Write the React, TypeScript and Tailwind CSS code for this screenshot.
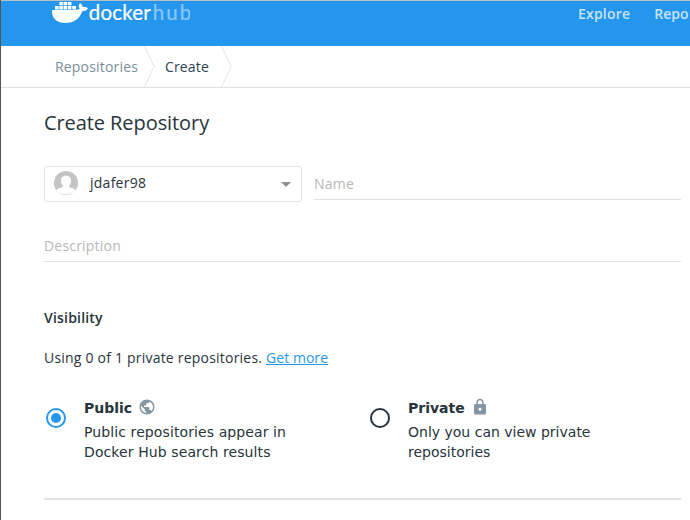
import { MdLock, MdPublic, MdArrowDropDown } from "react-icons/md";
import type { ReactNode } from "react";

function Logo() {
  return (
    <svg width="139" height="26" viewBox="51 0 139 26" className="-mt-px block">
      <g fill="#fff">
        <path d="M52 10H75.5C77.5 10 79 9.5 79.8 8.8C78.2 7 78.5 4.8 80 3C81.7 4.2 82.6 5.6 82.8 7.2C84.8 6.8 86.7 7.2 88 8.2C87 10.4 84.9 11.3 82.2 11.2C79.8 18.5 74.2 22.9 65 22.9C56.4 22.9 51.6 18.4 52 10Z" />
        <path d="M55 6h3.6v3.4H55zM59.3 6h3.6v3.4h-3.6zM63.6 6h3.6v3.4h-3.6zM67.9 6h3.6v3.4h-3.6zM72.2 6h3.8v3.4h-3.8zM59.3 2h3.6v3.3h-3.6zM63.6 2h3.6v3.3h-3.6zM67.9 2h3.6v3.3h-3.6z" />
      </g>
      <text x="88.8" y="20" textLength="62" strokeWidth="0.2" className="fill-white stroke-white font-['Lato',sans-serif] text-[20.5px] font-normal">
        docker
      </text>
      <text x="152.8" y="20" textLength="38.5" strokeWidth="0.2" className="fill-[#8cc6f6] stroke-[#8cc6f6] font-['Lato',sans-serif] text-[20.5px] font-normal">
        hub
      </text>
    </svg>
  );
}

function Chevron() {
  return (
    <svg width="11" height="41" viewBox="0 0 11 41" className="block shrink-0" fill="none" stroke="#e3e5e7">
      <path d="M.5 0L10 20.5L.5 41" />
    </svg>
  );
}

function Avatar() {
  return (
    <svg width="24" height="24" viewBox="0 0 24 24" className="mb-0.5 block shrink-0">
      <circle cx="12" cy="12" r="12" fill="#c4c4c4" />
      <path
        d="M12 4.8C8.9 4.8 6.9 6.8 6.9 9.6C6.9 12 7.8 13.9 9.1 15C9 16.1 7.8 16.5 5.8 17.1C4 17.7 2.8 18.7 2.2 19.6C4.6 22.4 8.1 23.6 12 23.6C15.9 23.6 19.4 22.4 21.8 19.6C21.2 18.7 20 17.7 18.2 17.1C16.2 16.5 15 16.1 14.9 15C16.2 13.9 17.1 12 17.1 9.6C17.1 6.8 15.1 4.8 12 4.8Z"
        fill="#fff"
      />
    </svg>
  );
}

function Option({ title, icon, checked, children }: { title: string; icon: ReactNode; checked?: boolean; children: ReactNode }) {
  return (
    <div className="flex w-[324px] shrink-0 pl-0.5 font-['DejaVu_Sans',sans-serif]">
      <span className={`mt-[10px] mr-[18px] flex size-5 shrink-0 items-center justify-center rounded-full border-2 ${checked ? "border-[#2496ed]" : "border-[#27343b]"}`}>
        {checked && <span className="size-[10px] rounded-full bg-[#2496ed]" />}
      </span>
      <div>
        <div className="flex h-5 items-center text-[14px] font-bold">
          {title}
          {icon}
        </div>
        <p className="mt-1 text-[14px] leading-5">{children}</p>
      </div>
    </div>
  );
}

export default function App() {
  return (
    <div className="h-[520px] w-[690px] overflow-hidden border-l border-[#555] bg-white font-['Open_Sans',sans-serif] text-[14px] text-[#27343b]">
      <header className="flex h-[46px] items-start border-t border-[#b9bec2] bg-[#2496ed] pl-[50px]">
        <Logo />
        <nav className="ml-[388px] flex gap-6 pt-[3px] leading-5 font-semibold whitespace-nowrap text-[#c8e4fb]">
          <span className="tracking-[0.2px]">Explore</span>
          <span>Repo</span>
        </nav>
      </header>
      <nav className="flex h-[42px] items-center border-b border-[#dfe1e3] pl-[54px]">
        <span className="w-[89px] tracking-[0.18px] text-[#7a8d98]">Repositories</span>
        <Chevron />
        <span className="ml-[10px] w-[56px] tracking-[0.15px] text-[#2b4356]">Create</span>
        <Chevron />
      </nav>
      <main className="pr-[9px] pl-[43px]">
        <h1 className="pt-[21px] text-[20px] leading-[28px] tracking-[-0.08px]">Create Repository</h1>
        <div className="mt-[29px] flex gap-3">
          <div className="flex h-9 w-[258px] items-center rounded-[3px] border border-[#e0e3e5] pr-[3px] pl-[9px]">
            <Avatar />
            <span className="mb-[3px] ml-3 flex-1 tracking-[0.25px]">jdafer98</span>
            <MdArrowDropDown size={24} color="#8f8f8f" />
          </div>
          <div className="flex h-[34px] flex-1 items-center border-b border-[#dfe1e3] pt-[2px] tracking-[0.2px] text-[#b8b8b8]">Name</div>
        </div>
        <div className="mt-[26px] flex h-[34px] items-center border-b border-[#dfe1e3] pt-[2px] tracking-[0.2px] text-[#b8b8b8]">Description</div>
        <h2 className="mt-[46px] leading-5 font-semibold tracking-[0.2px]">Visibility</h2>
        <p className="mt-5 leading-5">
          <span className="tracking-[0.21px]">Using 0 of 1 private repositories. </span>
          <a className="tracking-[0.05px] text-[#2496ed] underline">Get more</a>
        </p>
        <div className="mt-[30px] flex">
          <Option title="Public" checked icon={<MdPublic size={18} color="#8295a0" className="-mt-0.5 ml-1.5" />}>
            <span className="tracking-[0.1px]">
              Public repositories appear in
              <br />
              Docker Hub search results
            </span>
          </Option>
          <Option title="Private" icon={<MdLock size={18} color="#8295a0" className="-mt-0.5 ml-1.5" />}>
            Only you can view private
            <br />
            repositories
          </Option>
        </div>
        <hr className="mt-9 border-t-2 border-[#dde3e7]" />
      </main>
    </div>
  );
}
